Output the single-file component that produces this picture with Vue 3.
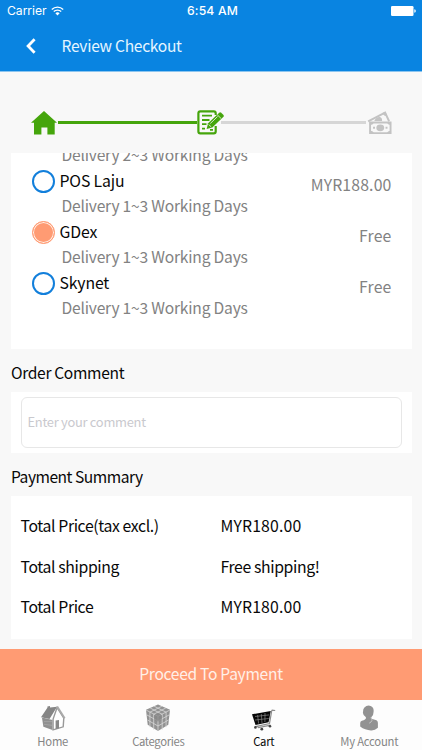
<script setup>
const options = [
  { name: 'POS Laju', delivery: 'Delivery 1~3 Working Days', price: 'MYR188.00', selected: false },
  { name: 'GDex', delivery: 'Delivery 1~3 Working Days', price: 'Free', selected: true },
  { name: 'Skynet', delivery: 'Delivery 1~3 Working Days', price: 'Free', selected: false },
]
const totals = [
  { label: 'Total Price(tax excl.)', value: 'MYR180.00' },
  { label: 'Total shipping', value: 'Free shipping!' },
  { label: 'Total Price', value: 'MYR180.00' },
]
</script>

<template>
  <div class="screen">
    <header class="header">
      <div class="status">
        <div class="carrier">
          <span>Carrier</span>
          <svg class="wifi" viewBox="0 0 13 10" width="13" height="10">
            <path d="M.8 3.4a8.2 8.2 0 0 1 11.4 0M2.8 5.6a5.3 5.3 0 0 1 7.4 0" fill="none" stroke="#fff" stroke-width="1.4" />
            <path d="M4.4 7.3a3 3 0 0 1 4.2 0L6.5 9.5z" fill="#fff" />
          </svg>
        </div>
        <span class="clock">6:54 AM</span>
        <svg class="battery" viewBox="0 0 25 10" width="25" height="10">
          <rect width="22.5" height="10" rx="1.3" fill="#fff" />
          <path d="M23.3 3.2q1.5.2 1.5 1.8t-1.5 1.8z" fill="#fff" />
        </svg>
      </div>
      <div class="nav">
        <svg class="back" viewBox="0 0 10 16" width="10" height="16">
          <path d="M8.6 1.3 2.1 8l6.5 6.7" fill="none" stroke="#fff" stroke-width="2.8" />
        </svg>
        <h1>Review Checkout</h1>
      </div>
    </header>

    <div class="stepper">
      <svg class="step-home" viewBox="0 0 26 24" width="26" height="24">
        <path d="M13 0 26 11.7h-2.3V23.5h-7.3v-7h-6v7H3V11.7H0z" fill="#45a50c" />
      </svg>
      <span class="line done"></span>
      <svg class="step-form" viewBox="0 0 28 25" width="28" height="25">
        <path d="M18.7 5V3.3Q18.7 1.4 16.8 1.4H3.3Q1.4 1.4 1.4 3.3v18.2q0 1.9 1.9 1.9h13.5q1.9 0 1.9-1.9V16" fill="none" stroke="#45a50c" stroke-width="2.2" />
        <path d="M5 5.7h10M5 10h7.5M5 14.2h4.5M5 18.6h3M13 19.8h3" stroke="#45a50c" stroke-width="1.8" />
        <path d="m9.6 18.9 1.5-5.6L22.2 2.7q1-.8 2 0l2.3 2.2q.8 1 0 1.9L15.3 17.4z" fill="#45a50c" />
        <path d="m11.6 14.5 2.6 2.3M20.3 4.8l3.9 3.8M13.3 13.5l7.3-7" stroke="#f8f8f8" stroke-width=".8" />
      </svg>
      <span class="line todo"></span>
      <svg class="step-pay" viewBox="0 0 26 24" width="25" height="24">
        <path d="M1.2 10.3 18.8 1.2 23 10.2" fill="none" stroke="#c3c3c3" stroke-width="2" />
        <path d="m15.5 1.8 3.7-1.6 1.8 4.1-2.3.4zM7.5 10q2-4.4 5.8-4.2 2.6.7 2.4 4.2z" fill="#c3c3c3" />
        <path d="M3.2 11.5h21.3v11H3.2z" fill="#f8f8f8" stroke="#c3c3c3" stroke-width="2" />
        <ellipse cx="13.8" cy="17" rx="4.1" ry="3.5" fill="#c3c3c3" />
        <path d="M3 11h4q0 3-4 3zM25 11v3q-4 0-4-3zM3 20q4 0 4 3H3zM25 20q-4 0-4 3h4z" fill="#c3c3c3" />
        <path d="M6.3 17h2M19.3 17h2" stroke="#c3c3c3" stroke-width="2" />
      </svg>
    </div>

    <section class="card shipping">
      <p class="clipped delivery">Delivery 2~3 Working Days</p>
      <div v-for="option in options" :key="option.name" class="option">
        <span class="radio" :class="{ selected: option.selected }"></span>
        <div class="details">
          <p class="name">{{ option.name }}</p>
          <p class="delivery">{{ option.delivery }}</p>
        </div>
        <span class="price">{{ option.price }}</span>
      </div>
    </section>

    <h2>Order Comment</h2>
    <section class="card comment">
      <div class="field">Enter your comment</div>
    </section>

    <h2 class="summary-title">Payment Summary</h2>
    <section class="card summary">
      <div v-for="row in totals" :key="row.label" class="total">
        <span>{{ row.label }}</span>
        <span :class="{ amount: row.value.startsWith('MYR') }">{{ row.value }}</span>
      </div>
    </section>

    <button class="proceed">Proceed To Payment</button>

    <nav class="tabs">
      <div class="tab home">
        <svg viewBox="0 0 26 26" width="26" height="26">
          <path d="M2 13h2.2l8.3 2v10.1L3.4 21.8z" fill="#909090" />
          <path d="M1 12.3 7.4 2.8V1.5L10 1v1.4l7.1-.7-7.6 12.2z" fill="#858585" />
          <path d="m17.1 2.6 6.7 10.5-.6 8.7-10.1 3V14z" fill="#fff" stroke="#999" stroke-width="1.4" />
          <path d="m17.2 1.5 7.5 11.7" fill="none" stroke="#aaa" stroke-width="1.8" />
          <path d="m15.6 15.5 3.4-.5v8.3l-3.4 1z" fill="#888" />
          <path d="M4 16.6h8M4 19.3l8 1" stroke="#aaa" stroke-width=".7" />
        </svg>
        <span>Home</span>
      </div>
      <div class="tab categories">
        <svg viewBox="0 0 26 28" width="26" height="28">
          <path d="m13 .5 12 5.3-1.7 15L13 27 2.7 20.8 1 5.8z" fill="#929292" />
          <path d="m5.2 4 12 6.3v15.3M9.1 2.2l12 6v15M20.8 4 8.7 10.3v15.3M16.9 2.2l-12 6v15M1 6l12 6.2L25 6M13 12v15M2 11l11 6 11-6M2.5 16 13 22l10.5-6" fill="none" stroke="#d8d8d8" stroke-width=".8" />
          <circle cx="13" cy="13.5" r="4.1" fill="#858585" opacity=".75" />
        </svg>
        <span>Categories</span>
      </div>
      <div class="tab cart active">
        <svg viewBox="0 0 25 24" width="25" height="24">
          <path d="M1 6.3 19.8 3l-2.2 11.2L4.5 17z" fill="#080808" />
          <path d="m4 8.5 14.3-1.6M4 12l13.7-1.5M6.6 7l1 8.5M10.3 6l.7 9M14 5l-.1 9" fill="none" stroke="#999" stroke-width=".6" />
          <path d="m20 4 1.2-1.8 3 .3M20.6 3.3l-2.1 12.2-14 3.2M6 18l1.6 1.6 12-2.5" fill="none" stroke="#8d8d8d" stroke-width="1.2" />
          <g fill="#444"><circle cx="4.4" cy="19.4" r="1.3" /><circle cx="10.8" cy="21.2" r="1.4" /><circle cx="19" cy="18.3" r="1.3" /></g>
        </svg>
        <span>Cart</span>
      </div>
      <div class="tab account">
        <svg viewBox="0 0 20 26" width="20" height="26">
          <path d="M5.4 2.6Q8-.2 11.6.9q3.4 1.5 3 5.3.2 3.4-2.1 5.9-.8 1.5.8 2l4.2 1.2q1.3.7 1.4 2.5v5Q16 25.6 12 25.4q-6-.2-10.8-3.9V18q.1-1.7 1.7-2.3Q8 14.5 6.7 12 3.4 9.6 4 7 4 4 5.4 2.6z" fill="#929292" />
          <path d="M11.7 12.6q3.2 3.2-1.5 5.6" fill="none" stroke="#c5c5c5" stroke-width="1" />
        </svg>
        <span>My Account</span>
      </div>
    </nav>
  </div>
</template>

<style>
body { margin: 0; }
</style>

<style scoped>
.screen {
  width: 422px;
  height: 750px;
  overflow: hidden;
  display: flex;
  flex-direction: column;
  background: #f8f8f8;
  color: #080808;
  font-family: "Noto Sans CJK SC", "Noto Sans", sans-serif;
  font-size: 15.8px;
}
p, h1, h2 { margin: 0; font-weight: 400; }
.header { height: 72px; flex: none; background: #0984e1; color: #fff; border-bottom: 1px solid #8cc5ef; box-sizing: border-box; }
.status { height: 22px; display: grid; grid-template-columns: 1fr auto 1fr; align-items: center; font: 12.2px/22px Inter, sans-serif; padding: 0 6px 0 7px; }
.carrier { display: flex; align-items: center; gap: 4px; letter-spacing: -.05px; }
.clock { font-weight: 500; letter-spacing: .15px; padding-left: 2px; }
.battery { justify-self: end; }
.nav { display: flex; align-items: center; height: 47px; padding-left: 25.5px; }
h1 { margin: -1px 0 0 26px; font-size: 15.6px; line-height: 24px; color: #e5f5ff; letter-spacing: -.3px; }
.stepper { height: 81px; flex: none; display: flex; align-items: center; padding: 20px 30px 0 30.5px; box-sizing: border-box; }
.stepper svg { flex: none; }
.line { flex: 1; height: 3px; background: #d6d6d6; }
.line.done { flex: none; width: 139px; background: #45a50c; margin: 0 .5px 0 1px; }
.line.todo { margin: 0 1px 0 -4px; }
.card { margin: 0 10.5px; background: #fff; flex: none; box-sizing: border-box; }
.shipping { height: 196px; overflow: hidden; }
.delivery { color: #828282; line-height: 25px; font-size: 15.6px; letter-spacing: -.2px; }
.clipped { height: 15px; margin: -11px 0 0 51px; padding-bottom: 11px; }
.option { height: 51px; display: flex; padding: 0 20px; }
.radio { width: 23px; height: 23px; flex: none; box-sizing: border-box; border: 2px solid #127fdb; border-radius: 50%; margin: 2px 0 0 1px; }
.radio.selected { border: 1px solid #ff9b73; background: #ff9b73; box-shadow: inset 0 0 0 1px #fff1e8; }
.details { margin-left: 5px; flex: 1; }
.name { height: 25px; line-height: 25px; letter-spacing: -.15px; }
.details .delivery { padding-left: 2px; }
.price { color: #828282; line-height: 24px; margin-top: 5px; letter-spacing: .15px; }
h2 { flex: none; height: 43px; padding: 11px 0 0 11px; box-sizing: border-box; font-size: 15.6px; line-height: 24px; letter-spacing: -.34px; }
.summary-title { letter-spacing: -.5px; }
.comment { height: 61px; padding: 5px 10px; }
.field { height: 51px; box-sizing: border-box; border: 1px solid #e7e7e7; border-radius: 6px; padding-left: 6px; font-size: 12.9px; line-height: 48px; color: #c9c9ce; letter-spacing: -.27px; }
.summary { height: 143px; padding: 10px 10px 0; }
.total { display: grid; grid-template-columns: 200px 1fr; height: 40.7px; line-height: 40px; letter-spacing: -.38px; }
.amount { letter-spacing: .15px; }
.proceed { margin: 10px 0 0; padding: 0 0 3px; border: 0; height: 51px; flex: none; background: #ff9b73; color: #fff0e8; font-family: inherit; font-size: 15.6px; line-height: 48px; letter-spacing: -.3px; }
.tabs { height: 50px; flex: none; background: #fdfdfd; display: grid; grid-template-columns: repeat(4, 1fr); }
.tab { display: flex; flex-direction: column; align-items: center; justify-content: space-between; padding: 5px 0 0; color: #858585; font-size: 11.3px; letter-spacing: -.25px; }
.tab span { height: 17px; line-height: 17px; }
.tab.active { color: #080808; }
.tab svg { flex: none; }
.categories svg { margin-top: -1px; }
.categories { letter-spacing: -.35px; }
.cart svg { margin-top: 3px; }
</style>
